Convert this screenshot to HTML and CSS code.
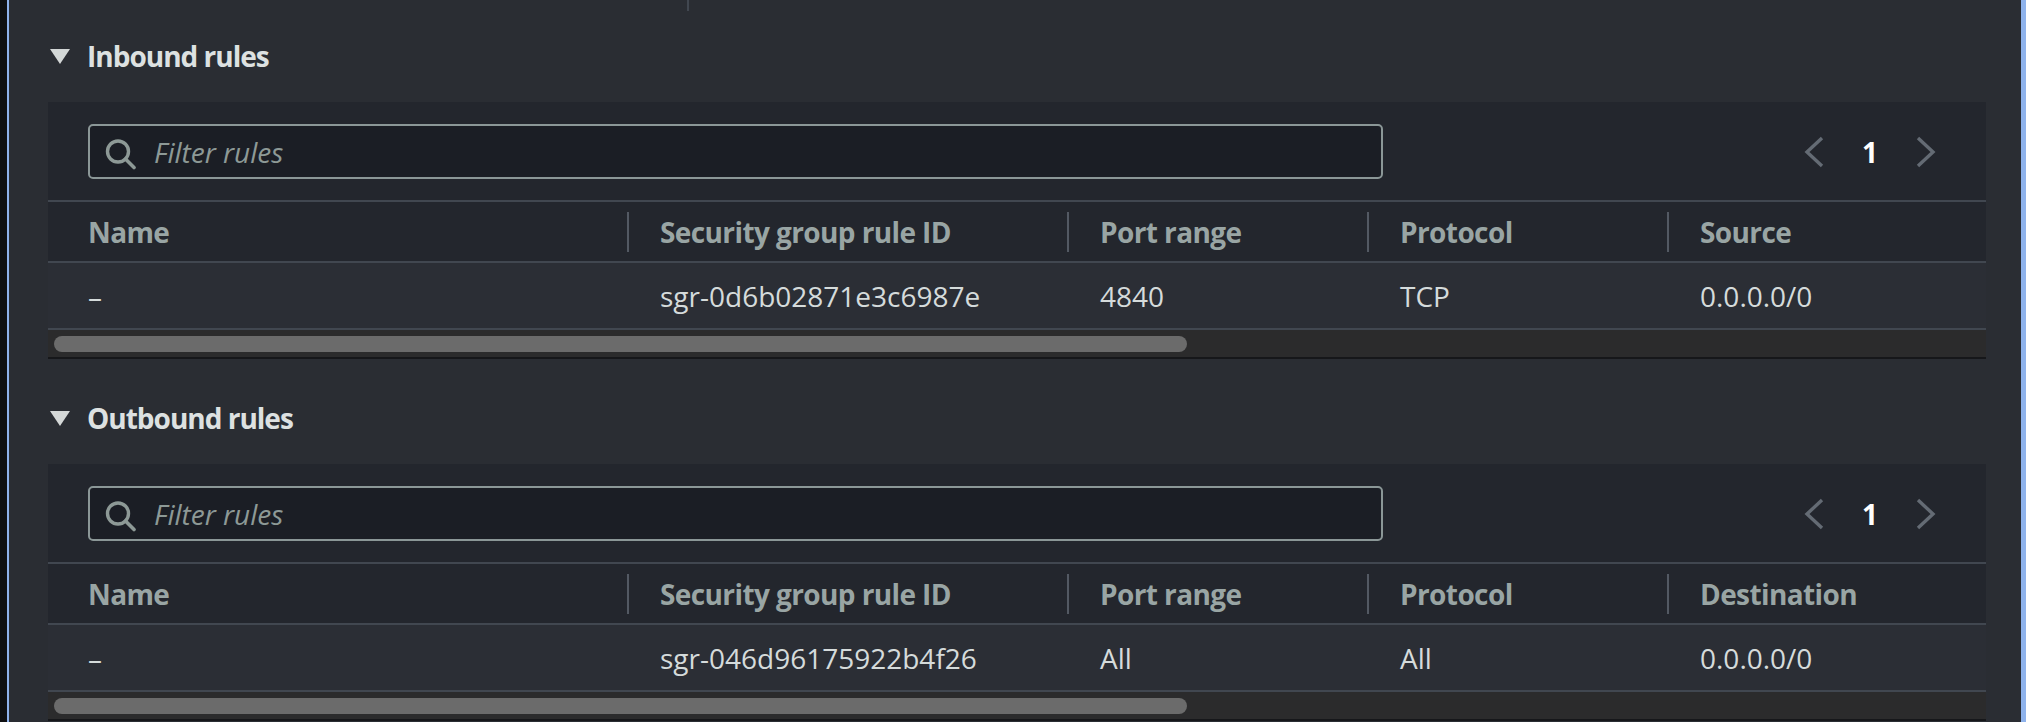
FILE: index.html
```html
<!DOCTYPE html>
<html lang="en">
<head>
<meta charset="utf-8">
<title>Security group rules</title>
<link rel="stylesheet" href="styles.css">
</head>
<body>
<div class="frame">
  <div class="page">
    <div class="top-strip"></div>

    <section class="section first">
      <h2 class="sec-head"><span class="caret"></span><span class="sec-title">Inbound rules</span></h2>
      <div class="card">
        <div class="toolbar">
          <div class="filter">
            <svg class="search" width="32" height="31" viewBox="0 0 32 31"><circle cx="13" cy="12.5" r="10.5" fill="none" stroke="#8d9996" stroke-width="3.4"/><line x1="20.5" y1="20" x2="29" y2="28.5" stroke="#8d9996" stroke-width="3.6" stroke-linecap="round"/></svg>
            <span class="placeholder">Filter rules</span>
          </div>
          <div class="pager">
            <svg class="chev" width="20" height="32" viewBox="0 0 20 32"><polyline points="18,2 3,16 18,30" fill="none" stroke="#646b74" stroke-width="3.4"/></svg>
            <span class="page-num">1</span>
            <svg class="chev" width="20" height="32" viewBox="0 0 20 32"><polyline points="2,2 17,16 2,30" fill="none" stroke="#646b74" stroke-width="3.4"/></svg>
          </div>
        </div>
        <div class="grid head">
          <div class="cell">Name</div>
          <div class="cell sep">Security group rule ID</div>
          <div class="cell sep">Port range</div>
          <div class="cell sep">Protocol</div>
          <div class="cell sep">Source</div>
        </div>
        <div class="grid body-row">
          <div class="cell">–</div>
          <div class="cell">sgr-0d6b02871e3c6987e</div>
          <div class="cell">4840</div>
          <div class="cell">TCP</div>
          <div class="cell">0.0.0.0/0</div>
        </div>
        <div class="scroll"><div class="thumb"></div></div>
      </div>
    </section>

    <section class="section">
      <h2 class="sec-head"><span class="caret"></span><span class="sec-title">Outbound rules</span></h2>
      <div class="card">
        <div class="toolbar">
          <div class="filter">
            <svg class="search" width="32" height="31" viewBox="0 0 32 31"><circle cx="13" cy="12.5" r="10.5" fill="none" stroke="#8d9996" stroke-width="3.4"/><line x1="20.5" y1="20" x2="29" y2="28.5" stroke="#8d9996" stroke-width="3.6" stroke-linecap="round"/></svg>
            <span class="placeholder">Filter rules</span>
          </div>
          <div class="pager">
            <svg class="chev" width="20" height="32" viewBox="0 0 20 32"><polyline points="18,2 3,16 18,30" fill="none" stroke="#646b74" stroke-width="3.4"/></svg>
            <span class="page-num">1</span>
            <svg class="chev" width="20" height="32" viewBox="0 0 20 32"><polyline points="2,2 17,16 2,30" fill="none" stroke="#646b74" stroke-width="3.4"/></svg>
          </div>
        </div>
        <div class="grid head">
          <div class="cell">Name</div>
          <div class="cell sep">Security group rule ID</div>
          <div class="cell sep">Port range</div>
          <div class="cell sep">Protocol</div>
          <div class="cell sep">Destination</div>
        </div>
        <div class="grid body-row">
          <div class="cell">–</div>
          <div class="cell">sgr-046d96175922b4f26</div>
          <div class="cell">All</div>
          <div class="cell">All</div>
          <div class="cell">0.0.0.0/0</div>
        </div>
        <div class="scroll"><div class="thumb"></div></div>
      </div>
    </section>
  </div>
</div>
</body>
</html>
```

FILE: styles.css
```css
* { box-sizing: border-box; }

html, body {
  margin: 0;
  padding: 0;
  height: 722px;
  overflow: hidden;
  background: #0f1012;
}

body {
  font-family: "Open Sans", "Liberation Sans", sans-serif;
  font-size: 28px;
  color: #d5dbdb;
}

.frame {
  margin-left: 7px;
  height: 722px;
  border-left: 2px solid #8fb3ec;
  border-right: 5px solid #8fb3ec;
  background: #2a2d33;
}

.page {
  padding: 0 35px 0 39px;
}

.top-strip {
  width: 641px;
  height: 11px;
  border-right: 2px solid #414750;
}

.section {
  padding-top: 31px;
}

.section.first {
  padding-top: 15px;
}

.sec-head {
  margin: 0 0 16px 0;
  height: 60px;
  display: flex;
  align-items: center;
  font-size: 28px;
  font-weight: 700;
  color: #dde1e1;
  letter-spacing: -1px;
}

.caret {
  width: 0;
  height: 0;
  margin-left: 2px;
  margin-right: 17px;
  border-left: 10px solid transparent;
  border-right: 10px solid transparent;
  border-top: 15px solid #d3d7d7;
}

.card {
  background: #23262d;
  box-shadow: 0 2px 0 #16171a;
}

.toolbar {
  display: flex;
  align-items: center;
  justify-content: space-between;
  padding: 22px 50px 21px 40px;
  border-bottom: 2px solid #414750;
}

.filter {
  width: 1295px;
  height: 55px;
  border: 2px solid #8b9797;
  border-radius: 5px;
  background: #1b1e25;
  display: flex;
  align-items: center;
  padding-left: 15px;
}

.search {
  margin-top: 6px;
  margin-right: 17px;
  flex: none;
}

.placeholder {
  font-style: italic;
  color: #8d9996;
}

.pager {
  display: flex;
  align-items: center;
  gap: 38px;
}

.chev { display: block; }

.page-num {
  font-weight: 700;
  color: #ffffff;
}

.grid {
  display: grid;
  grid-template-columns: 579px 440px 300px 300px 1fr;
  align-items: center;
  border-bottom: 2px solid #414750;
}

.grid.head {
  height: 61px;
  font-weight: 700;
  color: #99a5a4;
  letter-spacing: -0.6px;
}

.grid.body-row {
  height: 67px;
  background: #2b2e35;
  color: #d5dbdb;
}

.cell {
  padding-left: 33px;
  white-space: nowrap;
  display: flex;
  align-items: center;
}

.cell:first-child {
  padding-left: 40px;
}

.cell.sep {
  height: 40px;
  border-left: 2px solid #535963;
  padding-left: 31px;
}

.scroll {
  height: 27px;
  background: #2b2b2c;
  padding: 6px 0 0 6px;
}

.thumb {
  width: 1133px;
  height: 16px;
  border-radius: 8px;
  background: #6b6b6b;
}
```
